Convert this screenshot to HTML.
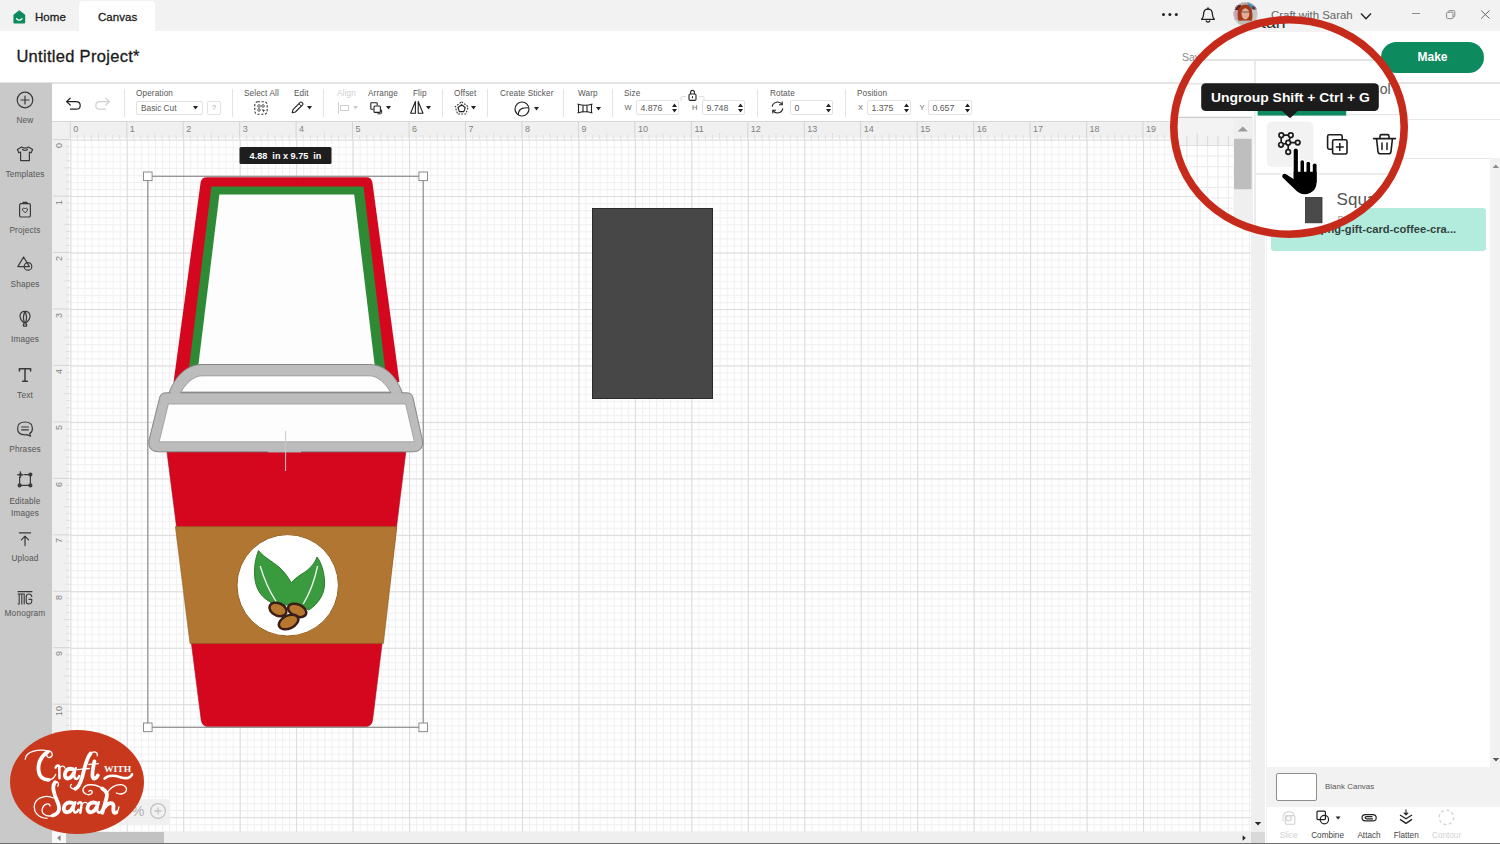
<!DOCTYPE html>
<html><head><meta charset="utf-8">
<style>
*{box-sizing:border-box;margin:0;padding:0}
html,body{width:1500px;height:844px;overflow:hidden;background:#fff;font-family:"Liberation Sans",sans-serif;color:#333}
.abs{position:absolute}
#topbar{left:0;top:0;width:1500px;height:32px;background:#f2f2f2}
#tabcanvas{left:79px;top:1px;width:76px;height:31px;background:#fff;border-radius:4px 4px 0 0}
.tabtxt{font-size:11.5px;color:#1c1c1c;top:10.8px;letter-spacing:.05px;-webkit-text-stroke:.3px #1c1c1c}
#header{left:0;top:31px;width:1500px;height:52px;background:#fff}
#title{left:16.4px;top:47.4px;font-size:16.5px;color:#1a1a1a;letter-spacing:.3px;-webkit-text-stroke:.3px #1a1a1a}
#hline{left:0;top:82px;width:1500px;height:2px;background:#e4e4e4}
#sidebar{left:0;top:83px;width:52px;height:761px;background:#c9c9c9}
.sb{left:-5px;width:60px;text-align:center;font-size:8.3px;color:#555;line-height:12px;letter-spacing:.15px}
#toolbar{left:52px;top:84px;width:1208px;height:37px;background:#fff}
.tl{font-size:8.2px;color:#555;top:89px;letter-spacing:.12px}
.tsep{top:89px;width:1px;height:28px;background:#e3e3e3}
.inp{top:100px;height:15px;border:1px solid #e2e2e2;border-radius:2px;background:#fff;font-size:8.8px;color:#5a5a5a;line-height:14px;padding-left:3.4px;white-space:nowrap;overflow:hidden}
#ruh{left:52px;top:121px;width:1199px;height:17px;background:#f0f0f0;border-top:1px solid #d8d8d8}
#ruv{left:52px;top:138px;width:18px;height:694px;background:#f0f0f0}
#canvas{left:69px;top:138px;width:1164px;height:692px;background:#fff;overflow:hidden}
.rn{font-size:9px;color:#828282}
#vscroll{left:1233px;top:121px;width:19px;height:723px;background:rgba(250,250,250,.45)}
#hscroll{left:52px;top:832px;width:1199px;height:12px;background:#efefef}
#gap{left:1252px;top:121px;width:15px;height:723px;background:#f4f4f4}
#panel{left:1252px;top:84px;width:248px;height:760px;background:#fff}
</style></head><body>
<div id="topbar" class="abs"></div>
<div id="tabcanvas" class="abs"></div>
<div id="header" class="abs"></div>
<div id="title" class="abs">Untitled Project*</div>
<div id="hline" class="abs"></div>
<div id="toolbar" class="abs"></div>
<div id="sidebar" class="abs"></div>
<div id="ruh" class="abs"></div>
<div id="ruv" class="abs"></div>
<div id="canvas" class="abs"></div>
<div id="hscroll" class="abs"></div>
<div id="panel" class="abs"></div>

<!-- home icon -->
<svg class="abs" style="left:12px;top:9px" width="15" height="16" viewBox="0 0 15 16"><path d="M7.3 1.2 L13.2 5.8 V13.2 Q13.2 14.4 12 14.4 H2.6 Q1.4 14.4 1.4 13.2 V5.8 Z" fill="#0f8a5f"/><path d="M4.6 9.8 Q7.3 12.6 10 9.8" fill="none" stroke="#fff" stroke-width="1.3" stroke-linecap="round"/></svg>
<div class="abs tabtxt" style="left:35px">Home</div>
<div class="abs tabtxt" style="left:98px">Canvas</div>
<!-- dots -->
<div class="abs" style="left:1162px;top:13px;width:3.4px;height:3.4px;border-radius:50%;background:#222;box-shadow:6.4px 0 0 #222,12.8px 0 0 #222"></div>
<!-- bell -->
<svg class="abs" style="left:1199px;top:7px" width="18" height="18" viewBox="0 0 18 18"><path d="M9 1 V2.2" stroke="#222" stroke-width="1.6" stroke-linecap="round"/><path d="M9 2.2 C5.9 2.2 4.6 4.6 4.6 7.2 C4.6 9.8 3.9 11 2.6 12.3 H15.4 C14.1 11 13.4 9.8 13.4 7.2 C13.4 4.6 12.1 2.2 9 2.2 Z" fill="none" stroke="#222" stroke-width="1.3" stroke-linejoin="round"/><path d="M7.2 14 Q9 16.2 10.8 14" fill="none" stroke="#222" stroke-width="1.3" stroke-linecap="round"/></svg>
<!-- avatar -->
<svg class="abs" style="left:1233px;top:1.5px" width="25" height="25" viewBox="0 0 25 25">
<defs><clipPath id="avc"><circle cx="12.5" cy="12" r="12"/></clipPath></defs>
<g clip-path="url(#avc)">
<rect width="25" height="25" fill="#c9c4c4"/>
<rect x="0" y="0" width="25" height="6" fill="#b9a9a4"/>
<path d="M14 0 H22 L24 7 H16 Z" fill="#3f8fb2"/>
<path d="M2 3 H8 V8 H2 Z" fill="#5a1f2a"/>
<path d="M19.5 4 H24 V7.5 H19.5 Z" fill="#5a1f3a"/>
<rect x="0" y="8" width="5" height="10" fill="#c7a3ad"/>
<path d="M4.6 13 Q4.2 3.4 12 2.6 Q19.6 3.2 19.4 12.6 Q19.8 17 18.4 19.4 L6 19.6 Q4.4 17 4.6 13 Z" fill="#a23a1a"/>
<ellipse cx="12.4" cy="11.8" rx="3.9" ry="5.6" fill="#e3aa98"/>
<rect x="8.8" y="9.4" width="7.2" height="1.3" fill="#8a6a66"/>
<path d="M1 25 Q3 18.6 9.4 18.6 H15.6 Q22 18.6 24 25 Z" fill="#bdb9b4"/>
</g>
<circle cx="12.5" cy="12" r="11.7" fill="none" stroke="#cfcfd2" stroke-width=".7"/>
</svg>
<div class="abs" style="left:1271px;top:9px;font-size:11.5px;color:#666;letter-spacing:-.05px">Craft with Sarah</div>
<svg class="abs" style="left:1359px;top:11px" width="14" height="10" viewBox="0 0 14 10"><path d="M2 2.5 L7 7.8 L12 2.5" fill="none" stroke="#222" stroke-width="1.3"/></svg>
<!-- window controls -->
<div class="abs" style="left:1412px;top:13px;width:8px;height:1px;background:#8a8a8a"></div>
<svg class="abs" style="left:1445px;top:9px" width="12" height="12" viewBox="0 0 12 12"><rect x="1.6" y="3.2" width="6.4" height="6.4" rx="1" fill="none" stroke="#8a8a8a" stroke-width="1"/><path d="M3.6 3.2 V2.4 Q3.6 1.6 4.4 1.6 H8.8 Q9.8 1.6 9.8 2.6 V7 Q9.8 7.8 9 7.8 H8" fill="none" stroke="#8a8a8a" stroke-width="1"/></svg>
<svg class="abs" style="left:1480px;top:9px" width="11" height="11" viewBox="0 0 11 11"><path d="M1.2 1.5 L9.5 9.5 M9.5 1.5 L1.2 9.5" stroke="#666" stroke-width="1"/></svg>
<!-- save / make -->
<div class="abs" style="left:1182px;top:51px;font-size:10.5px;color:#8a8a8a">Save</div>
<div class="abs" style="left:1381px;top:42px;width:103px;height:31px;border-radius:16px;background:#0e8a5f;color:#fff;font-weight:bold;font-size:12px;text-align:center;line-height:31px">Make</div>
<!--TOP-->
<svg class="abs" style="left:64px;top:96px" width="19" height="16" viewBox="0 0 19 16"><path d="M6.2 2.2 L2.6 5.6 L6.2 9" fill="none" stroke="#222" stroke-width="1.2" stroke-linecap="round" stroke-linejoin="round"/><path d="M2.8 5.6 H12 Q16.2 5.6 16.2 9.4 Q16.2 13.2 12 13.2 H6.5" fill="none" stroke="#222" stroke-width="1.2" stroke-linecap="round"/></svg>
<svg class="abs" style="left:93px;top:96px" width="19" height="16" viewBox="0 0 19 16"><path d="M12.8 2.2 L16.4 5.6 L12.8 9" fill="none" stroke="#cfcfcf" stroke-width="1.2" stroke-linecap="round" stroke-linejoin="round"/><path d="M16.2 5.6 H7 Q2.8 5.6 2.8 9.4 Q2.8 13.2 7 13.2 H12.5" fill="none" stroke="#cfcfcf" stroke-width="1.2" stroke-linecap="round"/></svg>
<div class="abs tsep" style="left:124px"></div>
<div class="abs tl" style="left:136px;color:#555">Operation</div>
<div class="abs inp" style="left:136px;width:67px;top:101px;height:14px;line-height:12.5px;font-size:8.3px;padding-left:4px">Basic Cut</div><svg class="abs" style="left:193px;top:106px" width="5" height="4" viewBox="0 0 5 4"><path d="M0 0 H5 L2.5 3.6 Z" fill="#222"/></svg>
<div class="abs inp" style="left:207px;width:14px;top:101px;height:14px;line-height:12px;padding:0;text-align:center;color:#999;font-size:7px">?</div>
<div class="abs tsep" style="left:232px"></div>
<div class="abs tl" style="left:244px;color:#555">Select All</div>
<svg class="abs" style="left:253px;top:100px" width="16" height="16" viewBox="0 0 16 16"><rect x="1.8" y="1.8" width="12.4" height="12.4" rx="3" fill="none" stroke="#333" stroke-width="1.1" stroke-dasharray="2.2 1.6"/><circle cx="6" cy="6" r="1.3" fill="none" stroke="#333" stroke-width=".8"/><circle cx="10" cy="6" r="1.3" fill="none" stroke="#333" stroke-width=".8"/><circle cx="6" cy="10" r="1.3" fill="none" stroke="#333" stroke-width=".8"/><path d="M9 9 L12.5 10.5 L10.8 11 L10.3 12.6 Z" fill="#333"/></svg>
<div class="abs tl" style="left:294px;color:#555">Edit</div>
<svg class="abs" style="left:290px;top:100px" width="15" height="15" viewBox="0 0 15 15"><path d="M2.2 12.8 L3 9.6 L10.2 2.4 Q11 1.6 11.8 2.4 L12.6 3.2 Q13.4 4 12.6 4.8 L5.4 12 Z" fill="none" stroke="#222" stroke-width="1.1" stroke-linejoin="round"/><path d="M9 3.8 L11.2 6" stroke="#222" stroke-width="1"/></svg><svg class="abs" style="left:307px;top:106px" width="5" height="4" viewBox="0 0 5 4"><path d="M0 0 H5 L2.5 3.6 Z" fill="#222"/></svg>
<div class="abs tsep" style="left:323px"></div>
<div class="abs tl" style="left:337px;color:#cfcfcf">Align</div>
<svg class="abs" style="left:337px;top:101px" width="14" height="14" viewBox="0 0 14 14"><path d="M1.5 1 V13" stroke="#cfcfcf" stroke-width="1"/><rect x="3.5" y="4.5" width="8" height="5" fill="none" stroke="#cfcfcf" stroke-width="1"/></svg><svg class="abs" style="left:353px;top:106px" width="5" height="4" viewBox="0 0 5 4"><path d="M0 0 H5 L2.5 3.6 Z" fill="#cfcfcf"/></svg>
<div class="abs tl" style="left:368px;color:#555">Arrange</div>
<svg class="abs" style="left:369px;top:101px" width="14" height="14" viewBox="0 0 14 14"><path d="M4.4 8.2 H2.6 Q1.8 8.2 1.8 7.4 V2.6 Q1.8 1.8 2.6 1.8 H7.4 Q8.2 1.8 8.2 2.6 V4.2" fill="none" stroke="#222" stroke-width="1.1"/><rect x="5" y="5" width="6.4" height="6.4" rx="1" fill="#fff" stroke="#222" stroke-width="1.1"/><path d="M12.6 8.6 V11.8 Q12.6 12.8 11.6 12.8 H8.4" fill="none" stroke="#222" stroke-width="1"/></svg><svg class="abs" style="left:386px;top:106px" width="5" height="4" viewBox="0 0 5 4"><path d="M0 0 H5 L2.5 3.6 Z" fill="#222"/></svg>
<div class="abs tl" style="left:413px;color:#555">Flip</div>
<svg class="abs" style="left:409px;top:100px" width="16" height="15" viewBox="0 0 16 15"><path d="M6.4 1.5 V13.2 H1.6 Z" fill="none" stroke="#222" stroke-width="1.1" stroke-linejoin="round"/><path d="M9.2 1.5 V13.2 H14 Z" fill="none" stroke="#222" stroke-width="1.1" stroke-linejoin="round"/></svg><svg class="abs" style="left:426px;top:106px" width="5" height="4" viewBox="0 0 5 4"><path d="M0 0 H5 L2.5 3.6 Z" fill="#222"/></svg>
<div class="abs tsep" style="left:442px"></div>
<div class="abs tl" style="left:454px;color:#555">Offset</div>
<svg class="abs" style="left:454px;top:100px" width="16" height="16" viewBox="0 0 16 16"><path d="M7.6 1.8 L14.2 6.8 L11.8 14 H3.6 L1.2 6.8 Z" fill="none" stroke="#333" stroke-width="1.1" stroke-dasharray="1.8 1.3" stroke-linejoin="round"/><path d="M7.6 4.8 L11.2 7.5 L9.9 11.6 H5.3 L4 7.5 Z" fill="none" stroke="#222" stroke-width="1.1" stroke-linejoin="round"/></svg><svg class="abs" style="left:471px;top:106px" width="5" height="4" viewBox="0 0 5 4"><path d="M0 0 H5 L2.5 3.6 Z" fill="#222"/></svg>
<div class="abs tsep" style="left:487px"></div>
<div class="abs tl" style="left:500px;color:#555">Create Sticker</div>
<svg class="abs" style="left:513px;top:100px" width="18" height="18" viewBox="0 0 18 18"><circle cx="9" cy="9" r="7" fill="none" stroke="#222" stroke-width="1.2"/><path d="M5.2 14.6 Q5.6 9.6 9.4 8.4 Q13 7.4 15.8 8" fill="none" stroke="#222" stroke-width="1.2"/></svg><svg class="abs" style="left:534px;top:107px" width="5" height="4" viewBox="0 0 5 4"><path d="M0 0 H5 L2.5 3.6 Z" fill="#222"/></svg>
<div class="abs tsep" style="left:563px"></div>
<div class="abs tl" style="left:578px;color:#555">Warp</div>
<svg class="abs" style="left:576px;top:102px" width="18" height="13" viewBox="0 0 18 13"><path d="M1.5 2 Q9 4.4 16.5 2 M1.5 11 Q9 8.6 16.5 11 M2.5 2.2 V10.8 M7 3 V10 M11 3 V10 M15.5 2.2 V10.8" fill="none" stroke="#222" stroke-width="1.1"/></svg><svg class="abs" style="left:596px;top:107px" width="5" height="4" viewBox="0 0 5 4"><path d="M0 0 H5 L2.5 3.6 Z" fill="#222"/></svg>
<div class="abs tsep" style="left:612px"></div>
<div class="abs tl" style="left:624px;color:#555">Size</div>
<div class="abs inp" style="left:636px;width:43px">4.876</div><svg class="abs" style="left:672px;top:103px" width="5" height="10" viewBox="0 0 5 10"><path d="M0 4 L2.5 0.6 L5 4 Z M0 6 L2.5 9.4 L5 6 Z" fill="#222"/></svg><div class="abs" style="left:624.5px;top:103px;font-size:7.5px;color:#666">W</div>
<svg class="abs" style="left:680px;top:89px" width="25" height="13" viewBox="0 0 25 13"><path d="M1 12 V8.5 Q1 7.5 2 7.5 H6 M24 12 V8.5 Q24 7.5 23 7.5 H19" fill="none" stroke="#ddd" stroke-width="1"/><rect x="9" y="5" width="7" height="6.4" rx="1.2" fill="#fff" stroke="#222" stroke-width="1.1"/><path d="M10.6 5 V3.4 Q10.6 1.4 12.5 1.4 Q14.4 1.4 14.4 3.4 V5" fill="none" stroke="#222" stroke-width="1.1"/><rect x="12" y="7.2" width="1" height="2" fill="#222"/></svg>
<div class="abs inp" style="left:702px;width:43px">9.748</div><svg class="abs" style="left:738px;top:103px" width="5" height="10" viewBox="0 0 5 10"><path d="M0 4 L2.5 0.6 L5 4 Z M0 6 L2.5 9.4 L5 6 Z" fill="#222"/></svg><div class="abs" style="left:692px;top:103px;font-size:7.5px;color:#666">H</div>
<div class="abs tsep" style="left:757px"></div>
<div class="abs tl" style="left:770px;color:#555">Rotate</div>
<svg class="abs" style="left:770px;top:100px" width="15" height="15" viewBox="0 0 15 15"><path d="M2.2 6.6 A5.4 5.4 0 0 1 12 4.4 M12.8 8.4 A5.4 5.4 0 0 1 3 10.6" fill="none" stroke="#222" stroke-width="1.1"/><path d="M12.2 1.6 V4.8 H9 M2.8 13.4 V10.2 H6" fill="none" stroke="#222" stroke-width="1.1"/></svg>
<div class="abs inp" style="left:790px;width:43px">0</div><svg class="abs" style="left:826px;top:103px" width="5" height="10" viewBox="0 0 5 10"><path d="M0 4 L2.5 0.6 L5 4 Z M0 6 L2.5 9.4 L5 6 Z" fill="#222"/></svg>
<div class="abs tsep" style="left:845px"></div>
<div class="abs tl" style="left:857px;color:#555">Position</div>
<div class="abs inp" style="left:867px;width:44px">1.375</div><svg class="abs" style="left:904px;top:103px" width="5" height="10" viewBox="0 0 5 10"><path d="M0 4 L2.5 0.6 L5 4 Z M0 6 L2.5 9.4 L5 6 Z" fill="#222"/></svg><div class="abs" style="left:858px;top:103px;font-size:7.5px;color:#666">X</div>
<div class="abs inp" style="left:928px;width:44px">0.657</div><svg class="abs" style="left:965px;top:103px" width="5" height="10" viewBox="0 0 5 10"><path d="M0 4 L2.5 0.6 L5 4 Z M0 6 L2.5 9.4 L5 6 Z" fill="#222"/></svg><div class="abs" style="left:919.5px;top:103px;font-size:7.5px;color:#666">Y</div>
<!--TOOLBAR-->
<svg class="abs" style="left:14.600000000000001px;top:90.0px" width="20" height="20" viewBox="0 0 20 20" fill="none" stroke="#3a3a3a" stroke-width="1.2" stroke-linecap="round" stroke-linejoin="round"><circle cx="10" cy="10" r="7.8"/><path d="M10 6 V14 M6 10 H14"/></svg>
<div class="abs sb" style="top:113.5px">New</div>
<svg class="abs" style="left:14.600000000000001px;top:144.0px" width="20" height="20" viewBox="0 0 20 20" fill="none" stroke="#3a3a3a" stroke-width="1.2" stroke-linecap="round" stroke-linejoin="round"><path d="M6.6 3 L2.4 5.6 L3.8 8.8 L5.6 8 V16.6 H14.4 V8 L16.2 8.8 L17.6 5.6 L13.4 3 Q10 5.4 6.6 3 Z"/><path d="M7.4 5.6 Q10 7.4 12.6 5.6"/></svg>
<div class="abs sb" style="top:168px">Templates</div>
<svg class="abs" style="left:14.600000000000001px;top:200.0px" width="20" height="20" viewBox="0 0 20 20" fill="none" stroke="#3a3a3a" stroke-width="1.2" stroke-linecap="round" stroke-linejoin="round"><rect x="4.6" y="3.6" width="10.8" height="13.4" rx="1.6"/><path d="M8 3.6 V2.4 H12 V3.6"/><path d="M10 12.6 L7.6 10.2 Q6.8 8.6 8.4 8.2 Q9.4 8 10 9 Q10.6 8 11.6 8.2 Q13.2 8.6 12.4 10.2 Z" stroke-width="1"/></svg>
<div class="abs sb" style="top:223.5px">Projects</div>
<svg class="abs" style="left:14.600000000000001px;top:254.0px" width="20" height="20" viewBox="0 0 20 20" fill="none" stroke="#3a3a3a" stroke-width="1.2" stroke-linecap="round" stroke-linejoin="round"><path d="M8.6 3 L14.4 12.6 H2.8 Z"/><circle cx="13" cy="12.4" r="3.8"/></svg>
<div class="abs sb" style="top:278px">Shapes</div>
<svg class="abs" style="left:14.600000000000001px;top:308.5px" width="20" height="20" viewBox="0 0 20 20" fill="none" stroke="#3a3a3a" stroke-width="1.2" stroke-linecap="round" stroke-linejoin="round"><path d="M10 2.4 Q15 2.4 15 7.4 Q15 10.4 11.6 13.4 H8.4 Q5 10.4 5 7.4 Q5 2.4 10 2.4 Z"/><path d="M10 2.6 Q7.4 7.4 9.2 13.2 M10 2.6 Q12.6 7.4 10.8 13.2"/><rect x="8.4" y="14.8" width="3.2" height="2.4" rx=".5"/></svg>
<div class="abs sb" style="top:332.5px">Images</div>
<svg class="abs" style="left:14.600000000000001px;top:364.5px" width="20" height="20" viewBox="0 0 20 20" fill="none" stroke="#3a3a3a" stroke-width="1.2" stroke-linecap="round" stroke-linejoin="round"><path d="M4.4 6 V3.8 H15.6 V6 M10 3.8 V16.2 M7.6 16.2 H12.4" stroke-width="1.5"/></svg>
<div class="abs sb" style="top:388.5px">Text</div>
<svg class="abs" style="left:14.600000000000001px;top:419.0px" width="20" height="20" viewBox="0 0 20 20" fill="none" stroke="#3a3a3a" stroke-width="1.2" stroke-linecap="round" stroke-linejoin="round"><path d="M10 3 Q17.4 3 17.4 9.4 Q17.4 13.2 14.6 14.6 L15.6 17.2 L12 15.6 Q11 15.8 10 15.8 Q2.6 15.8 2.6 9.4 Q2.6 3 10 3 Z"/><path d="M6.6 8 H13.4 M6.6 10.8 H13.4"/></svg>
<div class="abs sb" style="top:443px">Phrases</div>
<svg class="abs" style="left:14.600000000000001px;top:469.5px" width="20" height="20" viewBox="0 0 20 20" fill="none" stroke="#3a3a3a" stroke-width="1.2" stroke-linecap="round" stroke-linejoin="round"><path d="M4.6 7.4 V14 M6 15.4 H14 M15.4 14 V6 M14 4.6 H9.6"/><circle cx="4.6" cy="15.4" r="1.5" fill="#3a3a3a"/><circle cx="15.4" cy="15.4" r="1.5" fill="#3a3a3a"/><circle cx="15.4" cy="4.6" r="1.5" fill="#3a3a3a"/><path d="M5.4 1.6 L6.2 4 L8.6 4.8 L6.2 5.6 L5.4 8 L4.6 5.6 L2.2 4.8 L4.6 4 Z" fill="#3a3a3a" stroke-width=".6"/></svg>
<div class="abs sb" style="top:495px">Editable</div>
<div class="abs sb" style="top:506.5px">Images</div>
<svg class="abs" style="left:14.600000000000001px;top:528.5px" width="20" height="20" viewBox="0 0 20 20" fill="none" stroke="#3a3a3a" stroke-width="1.2" stroke-linecap="round" stroke-linejoin="round"><path d="M4.4 3.8 H15.6 M10 16.6 V7.4 M6.4 10.8 L10 7.2 L13.6 10.8"/></svg>
<div class="abs sb" style="top:552px">Upload</div>
<svg class="abs" style="left:14.600000000000001px;top:588.0px" width="20" height="20" viewBox="0 0 20 20" fill="none" stroke="#3a3a3a" stroke-width="1.2" stroke-linecap="round" stroke-linejoin="round"><path d="M3 3.6 H17 M3 6 H9.4 M4.2 6 V16 M6.8 6 V16 M9.2 6 V16 M4.2 16 H3 M16.8 8.6 Q16.4 6 13.8 6 Q11.2 6 11.2 9 V13 Q11.2 16 13.8 16 Q16.8 16 16.8 12.6 V11.4 H14" stroke-width="1.1"/></svg>
<div class="abs sb" style="top:607px">Monogram</div>
<!--SIDEBAR-->
<svg class="abs" style="left:52px;top:121px" width="1200" height="18" viewBox="52 121 1200 18"><path d="M70.3 122 V139" stroke="#d4d4d4" stroke-width="1"/><path d="M77.4 135 V139" stroke="#dedede" stroke-width="1"/><path d="M84.4 135 V139" stroke="#dedede" stroke-width="1"/><path d="M91.5 135 V139" stroke="#dedede" stroke-width="1"/><path d="M98.5 133 V139" stroke="#dedede" stroke-width="1"/><path d="M105.6 135 V139" stroke="#dedede" stroke-width="1"/><path d="M112.6 135 V139" stroke="#dedede" stroke-width="1"/><path d="M119.7 135 V139" stroke="#dedede" stroke-width="1"/><path d="M126.8 122 V139" stroke="#d4d4d4" stroke-width="1"/><path d="M133.8 135 V139" stroke="#dedede" stroke-width="1"/><path d="M140.9 135 V139" stroke="#dedede" stroke-width="1"/><path d="M147.9 135 V139" stroke="#dedede" stroke-width="1"/><path d="M155.0 133 V139" stroke="#dedede" stroke-width="1"/><path d="M162.0 135 V139" stroke="#dedede" stroke-width="1"/><path d="M169.1 135 V139" stroke="#dedede" stroke-width="1"/><path d="M176.2 135 V139" stroke="#dedede" stroke-width="1"/><path d="M183.2 122 V139" stroke="#d4d4d4" stroke-width="1"/><path d="M190.3 135 V139" stroke="#dedede" stroke-width="1"/><path d="M197.3 135 V139" stroke="#dedede" stroke-width="1"/><path d="M204.4 135 V139" stroke="#dedede" stroke-width="1"/><path d="M211.4 133 V139" stroke="#dedede" stroke-width="1"/><path d="M218.5 135 V139" stroke="#dedede" stroke-width="1"/><path d="M225.6 135 V139" stroke="#dedede" stroke-width="1"/><path d="M232.6 135 V139" stroke="#dedede" stroke-width="1"/><path d="M239.7 122 V139" stroke="#d4d4d4" stroke-width="1"/><path d="M246.7 135 V139" stroke="#dedede" stroke-width="1"/><path d="M253.8 135 V139" stroke="#dedede" stroke-width="1"/><path d="M260.9 135 V139" stroke="#dedede" stroke-width="1"/><path d="M267.9 133 V139" stroke="#dedede" stroke-width="1"/><path d="M275.0 135 V139" stroke="#dedede" stroke-width="1"/><path d="M282.0 135 V139" stroke="#dedede" stroke-width="1"/><path d="M289.1 135 V139" stroke="#dedede" stroke-width="1"/><path d="M296.1 122 V139" stroke="#d4d4d4" stroke-width="1"/><path d="M303.2 135 V139" stroke="#dedede" stroke-width="1"/><path d="M310.3 135 V139" stroke="#dedede" stroke-width="1"/><path d="M317.3 135 V139" stroke="#dedede" stroke-width="1"/><path d="M324.4 133 V139" stroke="#dedede" stroke-width="1"/><path d="M331.4 135 V139" stroke="#dedede" stroke-width="1"/><path d="M338.5 135 V139" stroke="#dedede" stroke-width="1"/><path d="M345.5 135 V139" stroke="#dedede" stroke-width="1"/><path d="M352.6 122 V139" stroke="#d4d4d4" stroke-width="1"/><path d="M359.7 135 V139" stroke="#dedede" stroke-width="1"/><path d="M366.7 135 V139" stroke="#dedede" stroke-width="1"/><path d="M373.8 135 V139" stroke="#dedede" stroke-width="1"/><path d="M380.8 133 V139" stroke="#dedede" stroke-width="1"/><path d="M387.9 135 V139" stroke="#dedede" stroke-width="1"/><path d="M394.9 135 V139" stroke="#dedede" stroke-width="1"/><path d="M402.0 135 V139" stroke="#dedede" stroke-width="1"/><path d="M409.1 122 V139" stroke="#d4d4d4" stroke-width="1"/><path d="M416.1 135 V139" stroke="#dedede" stroke-width="1"/><path d="M423.2 135 V139" stroke="#dedede" stroke-width="1"/><path d="M430.2 135 V139" stroke="#dedede" stroke-width="1"/><path d="M437.3 133 V139" stroke="#dedede" stroke-width="1"/><path d="M444.3 135 V139" stroke="#dedede" stroke-width="1"/><path d="M451.4 135 V139" stroke="#dedede" stroke-width="1"/><path d="M458.5 135 V139" stroke="#dedede" stroke-width="1"/><path d="M465.5 122 V139" stroke="#d4d4d4" stroke-width="1"/><path d="M472.6 135 V139" stroke="#dedede" stroke-width="1"/><path d="M479.6 135 V139" stroke="#dedede" stroke-width="1"/><path d="M486.7 135 V139" stroke="#dedede" stroke-width="1"/><path d="M493.8 133 V139" stroke="#dedede" stroke-width="1"/><path d="M500.8 135 V139" stroke="#dedede" stroke-width="1"/><path d="M507.9 135 V139" stroke="#dedede" stroke-width="1"/><path d="M514.9 135 V139" stroke="#dedede" stroke-width="1"/><path d="M522.0 122 V139" stroke="#d4d4d4" stroke-width="1"/><path d="M529.0 135 V139" stroke="#dedede" stroke-width="1"/><path d="M536.1 135 V139" stroke="#dedede" stroke-width="1"/><path d="M543.2 135 V139" stroke="#dedede" stroke-width="1"/><path d="M550.2 133 V139" stroke="#dedede" stroke-width="1"/><path d="M557.3 135 V139" stroke="#dedede" stroke-width="1"/><path d="M564.3 135 V139" stroke="#dedede" stroke-width="1"/><path d="M571.4 135 V139" stroke="#dedede" stroke-width="1"/><path d="M578.4 122 V139" stroke="#d4d4d4" stroke-width="1"/><path d="M585.5 135 V139" stroke="#dedede" stroke-width="1"/><path d="M592.6 135 V139" stroke="#dedede" stroke-width="1"/><path d="M599.6 135 V139" stroke="#dedede" stroke-width="1"/><path d="M606.7 133 V139" stroke="#dedede" stroke-width="1"/><path d="M613.7 135 V139" stroke="#dedede" stroke-width="1"/><path d="M620.8 135 V139" stroke="#dedede" stroke-width="1"/><path d="M627.8 135 V139" stroke="#dedede" stroke-width="1"/><path d="M634.9 122 V139" stroke="#d4d4d4" stroke-width="1"/><path d="M642.0 135 V139" stroke="#dedede" stroke-width="1"/><path d="M649.0 135 V139" stroke="#dedede" stroke-width="1"/><path d="M656.1 135 V139" stroke="#dedede" stroke-width="1"/><path d="M663.1 133 V139" stroke="#dedede" stroke-width="1"/><path d="M670.2 135 V139" stroke="#dedede" stroke-width="1"/><path d="M677.2 135 V139" stroke="#dedede" stroke-width="1"/><path d="M684.3 135 V139" stroke="#dedede" stroke-width="1"/><path d="M691.4 122 V139" stroke="#d4d4d4" stroke-width="1"/><path d="M698.4 135 V139" stroke="#dedede" stroke-width="1"/><path d="M705.5 135 V139" stroke="#dedede" stroke-width="1"/><path d="M712.5 135 V139" stroke="#dedede" stroke-width="1"/><path d="M719.6 133 V139" stroke="#dedede" stroke-width="1"/><path d="M726.6 135 V139" stroke="#dedede" stroke-width="1"/><path d="M733.7 135 V139" stroke="#dedede" stroke-width="1"/><path d="M740.8 135 V139" stroke="#dedede" stroke-width="1"/><path d="M747.8 122 V139" stroke="#d4d4d4" stroke-width="1"/><path d="M754.9 135 V139" stroke="#dedede" stroke-width="1"/><path d="M761.9 135 V139" stroke="#dedede" stroke-width="1"/><path d="M769.0 135 V139" stroke="#dedede" stroke-width="1"/><path d="M776.0 133 V139" stroke="#dedede" stroke-width="1"/><path d="M783.1 135 V139" stroke="#dedede" stroke-width="1"/><path d="M790.2 135 V139" stroke="#dedede" stroke-width="1"/><path d="M797.2 135 V139" stroke="#dedede" stroke-width="1"/><path d="M804.3 122 V139" stroke="#d4d4d4" stroke-width="1"/><path d="M811.3 135 V139" stroke="#dedede" stroke-width="1"/><path d="M818.4 135 V139" stroke="#dedede" stroke-width="1"/><path d="M825.5 135 V139" stroke="#dedede" stroke-width="1"/><path d="M832.5 133 V139" stroke="#dedede" stroke-width="1"/><path d="M839.6 135 V139" stroke="#dedede" stroke-width="1"/><path d="M846.6 135 V139" stroke="#dedede" stroke-width="1"/><path d="M853.7 135 V139" stroke="#dedede" stroke-width="1"/><path d="M860.7 122 V139" stroke="#d4d4d4" stroke-width="1"/><path d="M867.8 135 V139" stroke="#dedede" stroke-width="1"/><path d="M874.9 135 V139" stroke="#dedede" stroke-width="1"/><path d="M881.9 135 V139" stroke="#dedede" stroke-width="1"/><path d="M889.0 133 V139" stroke="#dedede" stroke-width="1"/><path d="M896.0 135 V139" stroke="#dedede" stroke-width="1"/><path d="M903.1 135 V139" stroke="#dedede" stroke-width="1"/><path d="M910.1 135 V139" stroke="#dedede" stroke-width="1"/><path d="M917.2 122 V139" stroke="#d4d4d4" stroke-width="1"/><path d="M924.3 135 V139" stroke="#dedede" stroke-width="1"/><path d="M931.3 135 V139" stroke="#dedede" stroke-width="1"/><path d="M938.4 135 V139" stroke="#dedede" stroke-width="1"/><path d="M945.4 133 V139" stroke="#dedede" stroke-width="1"/><path d="M952.5 135 V139" stroke="#dedede" stroke-width="1"/><path d="M959.5 135 V139" stroke="#dedede" stroke-width="1"/><path d="M966.6 135 V139" stroke="#dedede" stroke-width="1"/><path d="M973.7 122 V139" stroke="#d4d4d4" stroke-width="1"/><path d="M980.7 135 V139" stroke="#dedede" stroke-width="1"/><path d="M987.8 135 V139" stroke="#dedede" stroke-width="1"/><path d="M994.8 135 V139" stroke="#dedede" stroke-width="1"/><path d="M1001.9 133 V139" stroke="#dedede" stroke-width="1"/><path d="M1008.9 135 V139" stroke="#dedede" stroke-width="1"/><path d="M1016.0 135 V139" stroke="#dedede" stroke-width="1"/><path d="M1023.1 135 V139" stroke="#dedede" stroke-width="1"/><path d="M1030.1 122 V139" stroke="#d4d4d4" stroke-width="1"/><path d="M1037.2 135 V139" stroke="#dedede" stroke-width="1"/><path d="M1044.2 135 V139" stroke="#dedede" stroke-width="1"/><path d="M1051.3 135 V139" stroke="#dedede" stroke-width="1"/><path d="M1058.4 133 V139" stroke="#dedede" stroke-width="1"/><path d="M1065.4 135 V139" stroke="#dedede" stroke-width="1"/><path d="M1072.5 135 V139" stroke="#dedede" stroke-width="1"/><path d="M1079.5 135 V139" stroke="#dedede" stroke-width="1"/><path d="M1086.6 122 V139" stroke="#d4d4d4" stroke-width="1"/><path d="M1093.6 135 V139" stroke="#dedede" stroke-width="1"/><path d="M1100.7 135 V139" stroke="#dedede" stroke-width="1"/><path d="M1107.8 135 V139" stroke="#dedede" stroke-width="1"/><path d="M1114.8 133 V139" stroke="#dedede" stroke-width="1"/><path d="M1121.9 135 V139" stroke="#dedede" stroke-width="1"/><path d="M1128.9 135 V139" stroke="#dedede" stroke-width="1"/><path d="M1136.0 135 V139" stroke="#dedede" stroke-width="1"/><path d="M1143.0 122 V139" stroke="#d4d4d4" stroke-width="1"/><path d="M1150.1 135 V139" stroke="#dedede" stroke-width="1"/><path d="M1157.2 135 V139" stroke="#dedede" stroke-width="1"/><path d="M1164.2 135 V139" stroke="#dedede" stroke-width="1"/><path d="M1171.3 133 V139" stroke="#dedede" stroke-width="1"/><path d="M1178.3 135 V139" stroke="#dedede" stroke-width="1"/><path d="M1185.4 135 V139" stroke="#dedede" stroke-width="1"/><path d="M1192.4 135 V139" stroke="#dedede" stroke-width="1"/><path d="M1199.5 122 V139" stroke="#d4d4d4" stroke-width="1"/><path d="M1206.6 135 V139" stroke="#dedede" stroke-width="1"/><path d="M1213.6 135 V139" stroke="#dedede" stroke-width="1"/><path d="M1220.7 135 V139" stroke="#dedede" stroke-width="1"/><path d="M1227.7 133 V139" stroke="#dedede" stroke-width="1"/></svg>
<div class="abs rn" style="left:73.3px;top:124px">0</div>
<div class="abs rn" style="left:129.8px;top:124px">1</div>
<div class="abs rn" style="left:186.2px;top:124px">2</div>
<div class="abs rn" style="left:242.7px;top:124px">3</div>
<div class="abs rn" style="left:299.1px;top:124px">4</div>
<div class="abs rn" style="left:355.6px;top:124px">5</div>
<div class="abs rn" style="left:412.1px;top:124px">6</div>
<div class="abs rn" style="left:468.5px;top:124px">7</div>
<div class="abs rn" style="left:525.0px;top:124px">8</div>
<div class="abs rn" style="left:581.4px;top:124px">9</div>
<div class="abs rn" style="left:637.9px;top:124px">10</div>
<div class="abs rn" style="left:694.4px;top:124px">11</div>
<div class="abs rn" style="left:750.8px;top:124px">12</div>
<div class="abs rn" style="left:807.3px;top:124px">13</div>
<div class="abs rn" style="left:863.7px;top:124px">14</div>
<div class="abs rn" style="left:920.2px;top:124px">15</div>
<div class="abs rn" style="left:976.7px;top:124px">16</div>
<div class="abs rn" style="left:1033.1px;top:124px">17</div>
<div class="abs rn" style="left:1089.6px;top:124px">18</div>
<div class="abs rn" style="left:1146.0px;top:124px">19</div>
<svg class="abs" style="left:52px;top:139px" width="18" height="693" viewBox="52 139 18 693"><path d="M53 139.6 H70" stroke="#d4d4d4" stroke-width="1"/><path d="M66 146.7 H70" stroke="#dedede" stroke-width="1"/><path d="M66 153.7 H70" stroke="#dedede" stroke-width="1"/><path d="M66 160.8 H70" stroke="#dedede" stroke-width="1"/><path d="M64 167.8 H70" stroke="#dedede" stroke-width="1"/><path d="M66 174.9 H70" stroke="#dedede" stroke-width="1"/><path d="M66 181.9 H70" stroke="#dedede" stroke-width="1"/><path d="M66 189.0 H70" stroke="#dedede" stroke-width="1"/><path d="M53 196.1 H70" stroke="#d4d4d4" stroke-width="1"/><path d="M66 203.1 H70" stroke="#dedede" stroke-width="1"/><path d="M66 210.2 H70" stroke="#dedede" stroke-width="1"/><path d="M66 217.2 H70" stroke="#dedede" stroke-width="1"/><path d="M64 224.3 H70" stroke="#dedede" stroke-width="1"/><path d="M66 231.3 H70" stroke="#dedede" stroke-width="1"/><path d="M66 238.4 H70" stroke="#dedede" stroke-width="1"/><path d="M66 245.5 H70" stroke="#dedede" stroke-width="1"/><path d="M53 252.5 H70" stroke="#d4d4d4" stroke-width="1"/><path d="M66 259.6 H70" stroke="#dedede" stroke-width="1"/><path d="M66 266.6 H70" stroke="#dedede" stroke-width="1"/><path d="M66 273.7 H70" stroke="#dedede" stroke-width="1"/><path d="M64 280.8 H70" stroke="#dedede" stroke-width="1"/><path d="M66 287.8 H70" stroke="#dedede" stroke-width="1"/><path d="M66 294.9 H70" stroke="#dedede" stroke-width="1"/><path d="M66 301.9 H70" stroke="#dedede" stroke-width="1"/><path d="M53 309.0 H70" stroke="#d4d4d4" stroke-width="1"/><path d="M66 316.0 H70" stroke="#dedede" stroke-width="1"/><path d="M66 323.1 H70" stroke="#dedede" stroke-width="1"/><path d="M66 330.2 H70" stroke="#dedede" stroke-width="1"/><path d="M64 337.2 H70" stroke="#dedede" stroke-width="1"/><path d="M66 344.3 H70" stroke="#dedede" stroke-width="1"/><path d="M66 351.3 H70" stroke="#dedede" stroke-width="1"/><path d="M66 358.4 H70" stroke="#dedede" stroke-width="1"/><path d="M53 365.4 H70" stroke="#d4d4d4" stroke-width="1"/><path d="M66 372.5 H70" stroke="#dedede" stroke-width="1"/><path d="M66 379.6 H70" stroke="#dedede" stroke-width="1"/><path d="M66 386.6 H70" stroke="#dedede" stroke-width="1"/><path d="M64 393.7 H70" stroke="#dedede" stroke-width="1"/><path d="M66 400.7 H70" stroke="#dedede" stroke-width="1"/><path d="M66 407.8 H70" stroke="#dedede" stroke-width="1"/><path d="M66 414.8 H70" stroke="#dedede" stroke-width="1"/><path d="M53 421.9 H70" stroke="#d4d4d4" stroke-width="1"/><path d="M66 429.0 H70" stroke="#dedede" stroke-width="1"/><path d="M66 436.0 H70" stroke="#dedede" stroke-width="1"/><path d="M66 443.1 H70" stroke="#dedede" stroke-width="1"/><path d="M64 450.1 H70" stroke="#dedede" stroke-width="1"/><path d="M66 457.2 H70" stroke="#dedede" stroke-width="1"/><path d="M66 464.2 H70" stroke="#dedede" stroke-width="1"/><path d="M66 471.3 H70" stroke="#dedede" stroke-width="1"/><path d="M53 478.4 H70" stroke="#d4d4d4" stroke-width="1"/><path d="M66 485.4 H70" stroke="#dedede" stroke-width="1"/><path d="M66 492.5 H70" stroke="#dedede" stroke-width="1"/><path d="M66 499.5 H70" stroke="#dedede" stroke-width="1"/><path d="M64 506.6 H70" stroke="#dedede" stroke-width="1"/><path d="M66 513.6 H70" stroke="#dedede" stroke-width="1"/><path d="M66 520.7 H70" stroke="#dedede" stroke-width="1"/><path d="M66 527.8 H70" stroke="#dedede" stroke-width="1"/><path d="M53 534.8 H70" stroke="#d4d4d4" stroke-width="1"/><path d="M66 541.9 H70" stroke="#dedede" stroke-width="1"/><path d="M66 548.9 H70" stroke="#dedede" stroke-width="1"/><path d="M66 556.0 H70" stroke="#dedede" stroke-width="1"/><path d="M64 563.1 H70" stroke="#dedede" stroke-width="1"/><path d="M66 570.1 H70" stroke="#dedede" stroke-width="1"/><path d="M66 577.2 H70" stroke="#dedede" stroke-width="1"/><path d="M66 584.2 H70" stroke="#dedede" stroke-width="1"/><path d="M53 591.3 H70" stroke="#d4d4d4" stroke-width="1"/><path d="M66 598.3 H70" stroke="#dedede" stroke-width="1"/><path d="M66 605.4 H70" stroke="#dedede" stroke-width="1"/><path d="M66 612.5 H70" stroke="#dedede" stroke-width="1"/><path d="M64 619.5 H70" stroke="#dedede" stroke-width="1"/><path d="M66 626.6 H70" stroke="#dedede" stroke-width="1"/><path d="M66 633.6 H70" stroke="#dedede" stroke-width="1"/><path d="M66 640.7 H70" stroke="#dedede" stroke-width="1"/><path d="M53 647.7 H70" stroke="#d4d4d4" stroke-width="1"/><path d="M66 654.8 H70" stroke="#dedede" stroke-width="1"/><path d="M66 661.9 H70" stroke="#dedede" stroke-width="1"/><path d="M66 668.9 H70" stroke="#dedede" stroke-width="1"/><path d="M64 676.0 H70" stroke="#dedede" stroke-width="1"/><path d="M66 683.0 H70" stroke="#dedede" stroke-width="1"/><path d="M66 690.1 H70" stroke="#dedede" stroke-width="1"/><path d="M66 697.1 H70" stroke="#dedede" stroke-width="1"/><path d="M53 704.2 H70" stroke="#d4d4d4" stroke-width="1"/><path d="M66 711.3 H70" stroke="#dedede" stroke-width="1"/><path d="M66 718.3 H70" stroke="#dedede" stroke-width="1"/><path d="M66 725.4 H70" stroke="#dedede" stroke-width="1"/><path d="M64 732.4 H70" stroke="#dedede" stroke-width="1"/><path d="M66 739.5 H70" stroke="#dedede" stroke-width="1"/><path d="M66 746.5 H70" stroke="#dedede" stroke-width="1"/><path d="M66 753.6 H70" stroke="#dedede" stroke-width="1"/><path d="M53 760.7 H70" stroke="#d4d4d4" stroke-width="1"/><path d="M66 767.7 H70" stroke="#dedede" stroke-width="1"/><path d="M66 774.8 H70" stroke="#dedede" stroke-width="1"/><path d="M66 781.8 H70" stroke="#dedede" stroke-width="1"/><path d="M64 788.9 H70" stroke="#dedede" stroke-width="1"/><path d="M66 795.9 H70" stroke="#dedede" stroke-width="1"/><path d="M66 803.0 H70" stroke="#dedede" stroke-width="1"/><path d="M66 810.1 H70" stroke="#dedede" stroke-width="1"/><path d="M53 817.1 H70" stroke="#d4d4d4" stroke-width="1"/><path d="M66 824.2 H70" stroke="#dedede" stroke-width="1"/><path d="M66 831.2 H70" stroke="#dedede" stroke-width="1"/></svg>
<div class="abs rn" style="left:53px;top:136.1px;width:12px;height:12px;line-height:12px;transform:rotate(-90deg);text-align:left;white-space:nowrap">0</div>
<div class="abs rn" style="left:53px;top:192.6px;width:12px;height:12px;line-height:12px;transform:rotate(-90deg);text-align:left;white-space:nowrap">1</div>
<div class="abs rn" style="left:53px;top:249.0px;width:12px;height:12px;line-height:12px;transform:rotate(-90deg);text-align:left;white-space:nowrap">2</div>
<div class="abs rn" style="left:53px;top:305.5px;width:12px;height:12px;line-height:12px;transform:rotate(-90deg);text-align:left;white-space:nowrap">3</div>
<div class="abs rn" style="left:53px;top:361.9px;width:12px;height:12px;line-height:12px;transform:rotate(-90deg);text-align:left;white-space:nowrap">4</div>
<div class="abs rn" style="left:53px;top:418.4px;width:12px;height:12px;line-height:12px;transform:rotate(-90deg);text-align:left;white-space:nowrap">5</div>
<div class="abs rn" style="left:53px;top:474.9px;width:12px;height:12px;line-height:12px;transform:rotate(-90deg);text-align:left;white-space:nowrap">6</div>
<div class="abs rn" style="left:53px;top:531.3px;width:12px;height:12px;line-height:12px;transform:rotate(-90deg);text-align:left;white-space:nowrap">7</div>
<div class="abs rn" style="left:53px;top:587.8px;width:12px;height:12px;line-height:12px;transform:rotate(-90deg);text-align:left;white-space:nowrap">8</div>
<div class="abs rn" style="left:53px;top:644.2px;width:12px;height:12px;line-height:12px;transform:rotate(-90deg);text-align:left;white-space:nowrap">9</div>
<div class="abs rn" style="left:53px;top:703.7px;width:12px;height:12px;line-height:12px;transform:rotate(-90deg);text-align:left;white-space:nowrap">10</div>
<svg class="abs" style="left:70px;top:139px" width="1182" height="693" viewBox="70 139 1182 693"><defs><pattern id="gm" x="70.3" y="139.6" width="7.0575" height="7.0575" patternUnits="userSpaceOnUse"><path d="M0.5 0 V7.0575 M0 0.5 H7.0575" stroke="#f0f0f0" stroke-width="1"/></pattern><pattern id="gM" x="70.3" y="139.6" width="56.46" height="56.46" patternUnits="userSpaceOnUse"><path d="M0.5 0 V56.46 M0 0.5 H56.46" stroke="#dcdcdc" stroke-width="1"/></pattern></defs><rect x="70" y="139" width="1182" height="693" fill="#fff"/><rect x="70" y="139" width="1182" height="693" fill="url(#gm)"/><rect x="70" y="139" width="1182" height="693" fill="url(#gM)"/></svg>
<!--RULERS-->

<svg class="abs" style="left:70px;top:139px" width="1163" height="691" viewBox="70 139 1163 691">
<!-- dark rectangle -->
<rect x="592.5" y="208.5" width="120" height="190" fill="#474747" stroke="#2b2b2b" stroke-width="1"/>
<!-- red back -->
<path d="M207 177.2 H366.4 Q371.4 177.2 372.4 182.6 L399.4 382 H173.6 L200.6 182.6 Q201.6 177.2 207 177.2 Z" fill="#d5071f"/>
<!-- green -->
<path d="M211.4 186.6 H363.6 L385.5 372 H188.5 Z" fill="#2f8a36"/>
<!-- white inner -->
<path d="M219.4 194.6 H354.2 L375.5 372 H197.5 Z" fill="#fdfdfd"/>
<!-- red body -->
<path d="M167 452 H405.8 L372.6 720 Q371.8 726.6 365 726.6 H208.4 Q202.2 726.6 201.2 720 Z" fill="#d5071f" stroke="#b00518" stroke-width=".6"/>
<!-- brown band -->
<path d="M175.4 526.6 H396.8 L383.4 643.4 H190 Z" fill="#b17631" stroke="#8f5c22" stroke-width=".6"/>
<!-- white circle -->
<circle cx="287.7" cy="585.3" r="50.7" fill="#fff" stroke="#96601f" stroke-width="1"/>
<!-- leaves -->
<path d="M258.5 550.6 C264 558 276 563 283 571 C287 575.5 289.5 579.5 291.2 583 C294 579 300 575 305 572 C310 568.5 315 563 317 557 C321 562 324.5 572 324.6 583 C324.6 594 319 603 309 610 L300 606 L280 604.5 L272 603 C262 598 256 590 254.8 578 C253.8 567 255.5 558 258.5 550.6 Z" fill="#3a9a3e" stroke="#2d7d31" stroke-width="1" stroke-linejoin="round"/>
<path d="M260.2 566 Q266 586 276.4 602" fill="none" stroke="#f2f7f2" stroke-width="1.3"/>
<path d="M317.6 566 Q313 588 303.2 604" fill="none" stroke="#f2f7f2" stroke-width="1.3"/>
<!-- beans -->
<g stroke="#3a1f18" stroke-width="2.5" fill="#b8772f">
<ellipse cx="278" cy="609.4" rx="9" ry="6.2" transform="rotate(24 278 609.4)"/>
<ellipse cx="297.2" cy="610.4" rx="9.6" ry="6" transform="rotate(24 297.2 610.4)"/>
<ellipse cx="288.6" cy="622" rx="10.4" ry="6.4" transform="rotate(-26 288.6 622)"/>
</g>
<!-- lid dome -->
<path d="M202 364.5 H369.4 C386 364.5 397 378 402.2 392.6 H169.2 C174.4 378 185.4 364.5 202 364.5 Z" fill="#bcbcbc" stroke="#858585" stroke-width="1"/>
<path d="M202 375.8 H369.4 C378 375.8 386 384 390.4 392 H181 C185.4 384 193.4 375.8 202 375.8 Z" fill="#fdfdfd" stroke="#8e8e8e" stroke-width=".8"/>
<!-- lid rim -->
<path d="M166 392.8 H406.6 Q412.4 392.8 413.2 398.6 L422.6 441 Q423.6 451.6 413.4 451.8 H158.4 Q147.8 451.6 148.8 441 L159.4 398.6 Q160.2 392.8 166 392.8 Z" fill="#bcbcbc" stroke="#858585" stroke-width="1"/>
<path d="M168.4 404 H405.6 L414.4 441.8 H159.2 Z" fill="#fdfdfd" stroke="#9a9a9a" stroke-width=".8"/>
<rect x="170.4" y="391.6" width="10" height="2.2" fill="#bcbcbc"/><rect x="391.2" y="391.6" width="10" height="2.2" fill="#bcbcbc"/>
<!-- center cross -->
<path d="M285.6 431 V471 M268 451.8 H301" stroke="#c9c9c9" stroke-width="1"/>
<!-- selection -->
<rect x="147.8" y="176.3" width="275.4" height="551" fill="none" stroke="#8c8c8c" stroke-width="1.2"/>
<g fill="#fff" stroke="#8c8c8c" stroke-width="1">
<rect x="143.5" y="172" width="8.6" height="8.6"/><rect x="418.9" y="172" width="8.6" height="8.6"/>
<rect x="143.5" y="723" width="8.6" height="8.6"/><rect x="418.9" y="723" width="8.6" height="8.6"/>
</g>
<!-- size label -->
<rect x="239.5" y="147" width="92" height="17" rx="1.5" fill="#1e1e1e"/>
<text x="285.5" y="159" font-family="Liberation Sans, sans-serif" font-size="9.1" font-weight="bold" fill="#fff" text-anchor="middle" xml:space="preserve">4.88  in x 9.75  in</text>
</svg>
<!--CUP-->

<!-- vertical canvas scrollbar -->
<div class="abs" style="left:1251px;top:121px;width:13.5px;height:723px;background:#efefef"></div>
<svg class="abs" style="left:1251px;top:818px" width="14" height="12" viewBox="0 0 14 12"><path d="M3.8 4 L7 7.4 L10.2 4 Z" fill="#2a2a2a"/></svg>
<div class="abs" style="left:1251px;top:832px;width:13.5px;height:12px;background:#d9d9d9"></div>
<!-- h scrollbar -->
<div class="abs" style="left:66px;top:832px;width:98px;height:12px;background:#c2c2c2"></div>
<svg class="abs" style="left:52px;top:832px" width="14" height="12" viewBox="0 0 14 12"><rect width="14" height="12" fill="#f8f8f8"/><path d="M8.6 3 L5 6 L8.6 9 Z" fill="#8a8a8a"/></svg>
<svg class="abs" style="left:1235px;top:832px" width="17" height="12" viewBox="0 0 17 12"><path d="M7.6 3.2 L10.8 6 L7.6 8.8 Z" fill="#222"/></svg>
<!-- panel -->
<div class="abs" style="left:1266px;top:84px;width:1px;height:760px;background:#f1f1f1"></div>
<div class="abs" style="left:1267px;top:119px;width:233px;height:1px;background:#e8e8e8"></div>
<div class="abs" style="left:1267px;top:158px;width:223px;height:1px;background:#e8e8e8"></div>
<div class="abs" style="left:1490px;top:158px;width:10px;height:609px;background:#f1f1f1"></div>
<svg class="abs" style="left:1490px;top:160px" width="10" height="10" viewBox="0 0 10 10"><path d="M2.6 8 L5.8 4.6 L9 8 Z" fill="#8a8a8a"/></svg>
<svg class="abs" style="left:1490px;top:755px" width="10" height="10" viewBox="0 0 10 10"><path d="M2.8 3 L6 6.6 L9.2 3 Z" fill="#555"/></svg>
<div class="abs" style="left:1271px;top:207.5px;width:215px;height:43px;border-radius:3px;background:#b3ecdc"></div>
<div class="abs" style="left:1320.6px;top:222.5px;width:180px;font-size:11.2px;font-weight:bold;color:#34433f;letter-spacing:0;white-space:nowrap">png-gift-card-coffee-cra...</div>
<!-- blank canvas row -->
<div class="abs" style="left:1267px;top:766.5px;width:233px;height:40px;background:#f2f2f2"></div>
<div class="abs" style="left:1275.5px;top:772.5px;width:41.5px;height:28px;background:#fff;border:1px solid #8e8e8e;border-radius:2px"></div>
<div class="abs" style="left:1325px;top:782px;font-size:7.9px;color:#555;letter-spacing:.05px">Blank Canvas</div>
<!-- bottom actions -->
<svg class="abs" style="left:1267px;top:806px" width="233" height="38" viewBox="1267 806 233 38" font-family="Liberation Sans, sans-serif" font-size="8.2" text-anchor="middle">
 <g fill="none" stroke="#d2d2d2" stroke-width="1.1"><path d="M1283.4 821 Q1281.4 813 1288 811.8 Q1293.4 811.4 1294.4 815.4"/><rect x="1285.4" y="815.6" width="9.4" height="8.6" rx="1"/><circle cx="1288.6" cy="818.2" r="2.6"/></g>
 <text x="1288.6" y="837.6" fill="#cfcfcf">Slice</text>
 <g fill="none" stroke="#222" stroke-width="1.2"><rect x="1317" y="811.2" width="8.4" height="8.4" rx="1"/><circle cx="1324.4" cy="819.6" r="4.2"/></g>
 <path d="M1335.6 816.4 H1340.6 L1338.1 819.6 Z" fill="#222"/>
 <text x="1327.6" y="837.6" fill="#444">Combine</text>
 <g fill="none" stroke="#222" stroke-width="1.2"><path d="M1373.4 820.8 H1365.4 Q1362 820.8 1362 817.8 Q1362 814.6 1365.4 814.6 H1372.8 Q1376.2 814.6 1376.2 817.8 Q1376.2 821 1372.8 821 M1373 818.8 H1366.6 Q1365 818.8 1365 817.6 Q1365 816.6 1366.6 816.6 H1372.4"/></g>
 <text x="1369" y="837.6" fill="#444">Attach</text>
 <g fill="none" stroke="#222" stroke-width="1.3" stroke-linejoin="round"><path d="M1400 815 L1406 818.8 L1412 815 M1400 819.4 L1406 823.4 L1412 819.4"/><path d="M1406 809.6 V814.4 M1403.8 812.6 L1406 814.8 L1408.2 812.6" stroke-width="1.1"/></g>
 <text x="1406.2" y="837.6" fill="#444">Flatten</text>
 <circle cx="1446.4" cy="817.4" r="7.2" fill="none" stroke="#d2d2d2" stroke-width="1.2" stroke-dasharray="3.2 2.4"/>
 <text x="1446.6" y="837.6" fill="#d2d2d2">Contour</text>
</svg>
<div class="abs" style="left:0;top:843px;width:1500px;height:1px;background:#6e6e6e"></div>
<!--PANEL-->

<svg class="abs" style="left:1160px;top:0px" width="260" height="250" viewBox="1160 0 260 250" font-family="Liberation Sans, sans-serif">
<defs><clipPath id="mc"><ellipse cx="1289" cy="127" rx="113" ry="105"/></clipPath></defs>
<g clip-path="url(#mc)">
<rect x="1160" y="0" width="260" height="250" fill="#fff"/>
<rect x="1160" y="0" width="260" height="32" fill="#f2f2f2"/>
<text x="1261" y="28.2" font-size="17.6" fill="#2e2e2e">tan</text>
<path d="M1313 19 Q1317 28.5 1322 19" fill="none" stroke="#222" stroke-width="3"/>
<path d="M1195 60 H1390" stroke="#e3e3e3" stroke-width="2"/>
<path d="M1255 60 V240" stroke="#e6e6e6" stroke-width="1.6"/>
<path d="M1170 83.6 H1255" stroke="#e6e6e6" stroke-width="1.6"/>
<path d="M1346 114.6 H1410" stroke="#e6e6e6" stroke-width="1.4"/>
<!-- magnified ruler/grid/scrollbar -->
<rect x="1170" y="118" width="83.5" height="27.5" fill="#f3f3f3"/>
<rect x="1170" y="145.5" width="63.5" height="100" fill="#fff"/>
<path d="M1186.8 146 V240 M1197.2 146 V240 M1207.6 146 V240 M1218.0 146 V240 M1228.4 146 V240 M1170 156.2 H1233 M1170 166.6 H1233 M1170 177.0 H1233 M1170 187.4 H1233 M1170 197.8 H1233 M1170 208.2 H1233 M1170 218.6 H1233 M1170 229.0 H1233 M1170 239.4 H1233" stroke="#ededed" stroke-width="1.2" fill="none"/>
<path d="M1170 145.5 H1233.5" stroke="#dddddd" stroke-width="1.2"/>
<path d="M1186.8 136.5 V145.5 M1197.2 133 V145.5 M1207.6 136.5 V145.5 M1218.0 136.5 V145.5 M1228.4 136.5 V145.5" stroke="#dadada" stroke-width="1.2" fill="none"/>
<rect x="1233.5" y="118" width="19.5" height="125" fill="#efefef"/>
<rect x="1234" y="138.8" width="17.6" height="50.4" fill="#bebebe"/>
<path d="M1237.6 131.6 L1242.8 126.4 L1248 131.6 Z" fill="#9c9c9c"/>
<path d="M1178 117.4 H1252.4" stroke="#cacaca" stroke-width="1.3"/>
<!-- text fragments right -->
<text x="1369.6" y="93.5" font-size="14" fill="#555">Col</text>
<text x="1278" y="93.8" font-size="14.6" fill="#222">Layers</text>
<!-- green tab bar -->
<rect x="1257.6" y="111" width="88.6" height="4.6" fill="#0e8a5f"/>
<!-- ungroup btn -->
<rect x="1266.8" y="121.5" width="46.6" height="45.4" rx="5" fill="#f2f2f2"/>
<g fill="none" stroke="#1c1c1c" stroke-width="1.7">
 <path d="M1281.3 135.2 H1290.8 M1281.2 135.2 V144.8 M1290.8 135.2 L1288.6 142.7 M1281 144.8 L1288.2 142.7 M1288.2 142.7 H1297.7 M1288.2 142.7 V152"/>
 <circle cx="1281.3" cy="135.2" r="2.3" fill="#f2f2f2"/><circle cx="1290.8" cy="135.2" r="2.3" fill="#f2f2f2"/>
 <circle cx="1281" cy="144.8" r="2.3" fill="#f2f2f2"/><circle cx="1288.2" cy="142.7" r="2.3" fill="#f2f2f2"/>
 <circle cx="1297.7" cy="142.6" r="2.3" fill="#f2f2f2"/><circle cx="1288.2" cy="152" r="2.3" fill="#f2f2f2"/>
</g>
<!-- duplicate -->
<g fill="#fff" stroke="#1c1c1c" stroke-width="1.6" stroke-linejoin="round">
 <rect x="1327.6" y="134.8" width="14.6" height="14.4" rx="1.6"/>
 <rect x="1332.6" y="139.8" width="14.4" height="14.2" rx="1.6"/>
 <path d="M1339.8 143 V151 M1335.8 147 H1343.8" fill="none" stroke-width="1.5"/>
</g>
<!-- trash -->
<g fill="none" stroke="#1c1c1c" stroke-width="1.6" stroke-linejoin="round" stroke-linecap="round">
 <path d="M1373.6 138.6 H1395.4"/>
 <path d="M1380 138.4 V136.2 Q1380 134.6 1381.6 134.6 H1387.4 Q1389 134.6 1389 136.2 V138.4"/>
 <path d="M1376.6 139 L1378 151.6 Q1378.3 153.8 1380.6 153.8 H1388.4 Q1390.7 153.8 1391 151.6 L1392.4 139"/>
 <path d="M1382 143 V149.6 M1387 143 V149.6" stroke-width="1.5"/>
</g>
<path d="M1256 174 H1410" stroke="#e6e6e6" stroke-width="1.5"/>
<!-- layer row -->
<rect x="1305.4" y="197.4" width="16.6" height="25.4" fill="#4a4a4a" stroke="#333" stroke-width=".8"/>
<text x="1336.6" y="204.6" font-size="17" fill="#555">Squa</text>
<text x="1337.6" y="224" font-size="10" fill="#9a9a9a">Basic</text>
<!-- tooltip -->
<path d="M1281.6 110.6 H1298.4 L1291.2 117.2 Q1290 118.2 1288.8 117.2 Z" fill="#1c1c1c"/>
<rect x="1201.2" y="83.2" width="177.6" height="27.8" rx="4.5" fill="#1c1c1c"/>
<text x="1290.4" y="102.4" font-size="13.6" font-weight="bold" fill="#fff" text-anchor="middle" textLength="159" lengthAdjust="spacingAndGlyphs">Ungroup Shift + Ctrl + G</text>
<!-- hand cursor -->
<g transform="translate(1282 148)">
 <g fill="#fff" stroke="#fff" stroke-width="2.8" stroke-linejoin="round"><rect x="11.7" y="0.4" width="4.2" height="32" rx="2.1"/><rect x="18.5" y="12.3" width="3.5" height="20" rx="1.7"/><rect x="24.5" y="13.7" width="3.6" height="20" rx="1.8"/><rect x="30.8" y="15.4" width="3.8" height="20" rx="1.9"/><path d="M11.7 23.7 H34.6 V34 Q34.6 42 28 45 Q22.5 47.4 17.5 45 Q14 43 11 39.6 L0.8 29.8 Q-0.8 27.8 1 26.3 Q2.8 25.2 4.6 26.6 L11.7 31.2 Z"/></g>
 <g fill="#000"><rect x="11.7" y="0.4" width="4.2" height="32" rx="2.1"/><rect x="18.5" y="12.3" width="3.5" height="20" rx="1.7"/><rect x="24.5" y="13.7" width="3.6" height="20" rx="1.8"/><rect x="30.8" y="15.4" width="3.8" height="20" rx="1.9"/><path d="M11.7 23.7 H34.6 V34 Q34.6 42 28 45 Q22.5 47.4 17.5 45 Q14 43 11 39.6 L0.8 29.8 Q-0.8 27.8 1 26.3 Q2.8 25.2 4.6 26.6 L11.7 31.2 Z"/></g>
</g>
</g>
<ellipse cx="1289" cy="127" rx="115.2" ry="107.2" fill="none" stroke="#c62a1a" stroke-width="7.6"/>
</svg>
<!--MAG-->

<!-- zoom control (behind logo) -->
<div class="abs" style="left:96px;top:799px;width:74px;height:26px;border-radius:4px;background:rgba(238,238,238,.85)"></div>
<div class="abs" style="left:131.5px;top:803px;font-size:14.5px;color:#b4b4b4">%</div>
<svg class="abs" style="left:149px;top:802.3px" width="18" height="18" viewBox="0 0 18 18"><circle cx="9" cy="9" r="7.4" fill="none" stroke="#c2c2c2" stroke-width="1.3"/><path d="M9 5.4 V12.6 M5.4 9 H12.6" stroke="#c2c2c2" stroke-width="1.3"/></svg>
<!-- logo -->
<svg class="abs" style="left:5px;top:725px" width="145" height="114" viewBox="5 725 145 114">
<ellipse cx="77" cy="782" rx="67" ry="52" fill="#c8381c"/>
<g fill="none" stroke="#fff" stroke-linecap="round" stroke-linejoin="round">
<path stroke-width="3.8" d="M47.7 751.9 C40.4 756.4 37.6 764.3 38.7 771.0 C39.5 777.2 43.8 780.0 48.8 779.8 M73.0 769.3 C67.4 767.1 64.0 772.1 65.1 776.1 C66.3 780.0 71.3 778.9 73.6 773.3 M90.5 753.6 C86.5 757.5 84.8 767.6 82.0 777.8 C80.3 783.4 78.6 787.9 75.3 788.8 M94.4 761.4 C93.3 767.6 91.6 773.3 92.7 777.2 C93.5 779.5 96.1 778.9 97.8 775.5 M55.0 782.3 C51.6 785.6 53.9 794.6 57.3 801.4 C60.6 808.1 59.5 813.8 52.8 815.5 M72.5 803.1 C66.8 800.8 62.9 805.9 64.0 809.8 C65.1 813.8 70.8 812.7 73.0 807.0 M96.1 803.1 C90.5 800.8 86.5 805.9 87.7 809.8 C88.8 813.8 94.4 812.7 96.7 807.0 M102.3 788.5 C106.8 791.8 107.9 793.5 106.2 799.1 L102.3 812.7 M104.0 808.1 C107.9 802.0 114.1 801.4 113.5 807.0 C113.0 811.5 113.5 813.8 116.3 812.4"/>
<path stroke-width="2.5" d="M55.6 767.6 C56.7 764.8 59.5 764.8 59.3 768.2 L59.5 778.3 M75.8 768.2 C74.1 773.3 73.6 777.2 75.3 778.7 C77.0 779.5 78.6 777.8 79.2 776.1 M104.5 778.7 C109.0 774.4 114.7 775.5 120.3 777.2 C125.9 778.9 130.4 778.3 132.1 774.2 M75.3 802.3 C73.6 807.0 73.0 811.0 74.7 812.4 C76.4 813.2 77.5 811.5 78.4 809.8 M78.1 803.6 C79.8 801.4 82.0 802.0 81.5 805.3 L80.3 812.7 M98.9 802.3 C97.2 807.0 96.7 811.0 98.3 812.4 C100.0 813.2 101.4 811.5 102.3 809.8"/>
<path stroke-width="1.3" d="M25.2 759.2 C25.8 751.9 37.0 748.5 48.8 750.8 C53.3 751.9 53.3 756.9 49.4 757.5 C47.7 757.7 46.6 756.4 47.1 755.3 M48.8 779.8 C52.2 779.5 54.5 777.2 55.6 774.4 M59.3 768.8 C61.2 765.4 64.0 765.4 65.1 768.2 M97.2 755.8 C98.3 751.9 93.3 750.8 90.5 753.6 M75.3 788.8 C71.3 789.6 69.1 786.2 71.3 784.5 M77.5 769.7 L89.3 768.5 M88.8 764.5 L98.3 763.6 M57.8 786.2 C59.5 783.4 57.3 780.6 55.0 782.3 M52.8 815.5 C46.0 817.2 40.4 813.8 42.6 808.1 C43.8 803.6 49.4 802.5 50.0 805.9 M47.1 818.3 C38.1 818.3 32.5 811.5 34.8 803.6 C37.0 796.9 47.1 794.6 53.3 798.0 M81.6 805.3 C83.1 802.0 86.5 801.4 87.7 804.2 M88.8 791.3 C90.5 789.0 93.3 791.3 91.6 793.5 C88.8 796.3 82.0 793.5 83.1 789.0 C84.8 783.4 95.5 783.4 102.3 788.5 M107.0 793.5 C111.3 784.5 122.5 782.3 125.9 787.3 C128.2 791.8 122.5 795.8 116.3 793.0 M116.3 812.4 C117.8 811.5 118.6 809.3 118.9 807.0"/>
</g>

<text x="117.6" y="772.2" font-family="Liberation Serif, serif" font-weight="bold" font-size="8" fill="#fff" text-anchor="middle" textLength="27" lengthAdjust="spacingAndGlyphs">WITH</text>

</svg>
<!--LOGO-->
</body></html>
